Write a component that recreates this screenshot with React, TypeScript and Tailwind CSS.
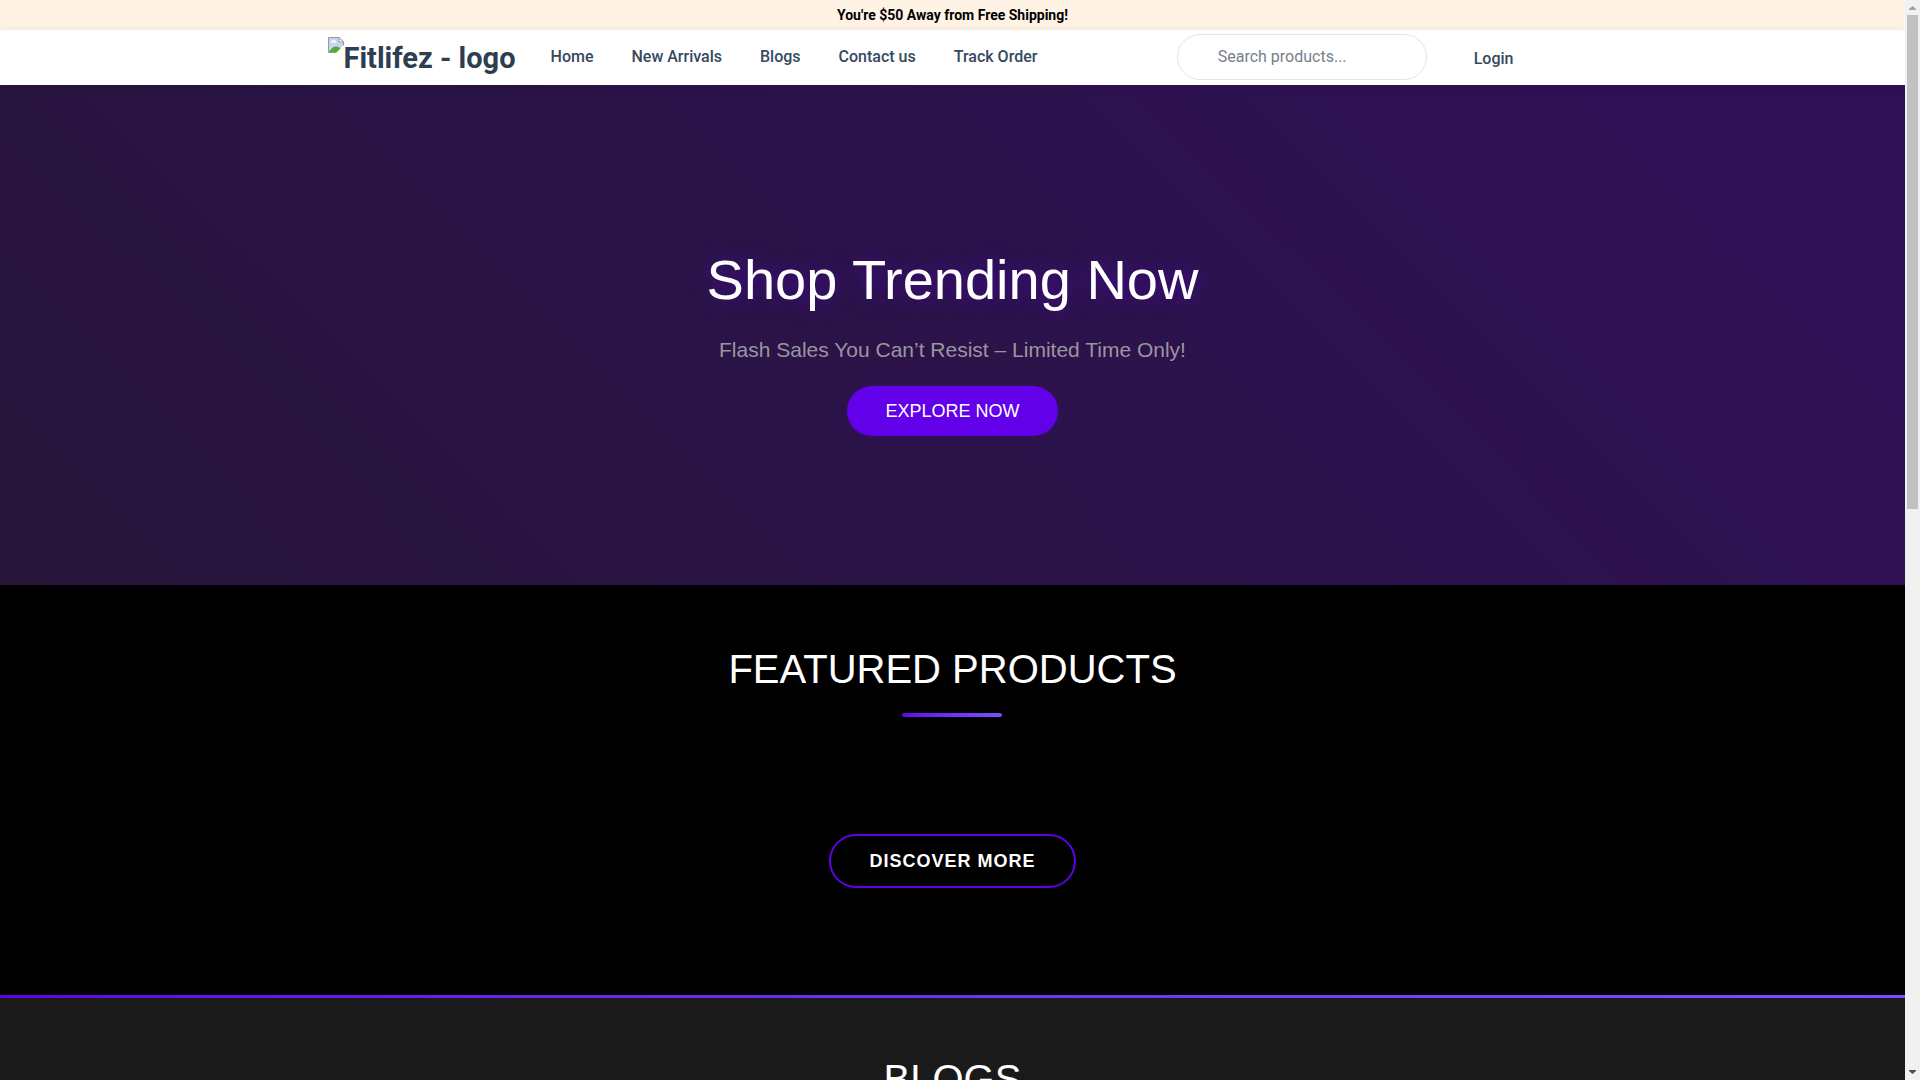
const links = ["Home", "New Arrivals", "Blogs", "Contact us", "Track Order"];

function BrokenImage() {
  return (
    <svg width="16" height="16" viewBox="0 0 16 16" aria-hidden="true">
      <path d="M0.5 0.5H11L15.5 5V15.5H0.5Z" fill="#c5d6f5" />
      <path d="M3 5.5a1.3 1.3 0 0 1 1.2-1.6A1.8 1.8 0 0 1 7.4 4a1 1 0 0 1 .6 1.5Z" fill="#fff" />
      <path d="M1 15C3 11 6 9 9 9.5S13 12 15 15Z" fill="#56ab32" />
      <path d="M0.5 15.5V0.5H11L15.5 5V15.5H0.5" fill="none" stroke="#9a9a9a" />
      <path d="M11 0.5V5H15.5Z" fill="#fff" stroke="#9a9a9a" />
      <path d="M16 8L8 16H10.5L16 11Z" fill="#fff" />
      <path d="M16 10.500L10.500 16H16Z" fill="#fff" />
    </svg>
  );
}

function Header() {
  return (
    <header className="font-[Roboto,sans-serif]">
      <div className="h-[30px] bg-[#fff3e6] text-center text-sm leading-[30px] font-bold text-black">
        You're $50 Away from Free Shipping!
      </div>
      <div className="relative bg-white shadow-[0_2px_10px_rgba(0,0,0,0.1)]">
        <div className="mx-auto flex h-[55px] max-w-[1280px] items-center px-[15px] pb-0.5">
          <a href="#" className="flex pt-0.5 text-[#2c3e50]">
            <BrokenImage />
            <span className="text-[29px] leading-[42px] font-bold">Fitlifez - logo</span>
          </a>
          <nav className="ml-[35px] flex gap-[38px]">
            {links.map((link) => (
              <a key={link} href="#" className="font-medium text-[#34495e]">
                {link}
              </a>
            ))}
          </nav>
          <input
            type="search"
            aria-label="Search products"
            placeholder="Search products..."
            className="ml-auto h-[46px] w-[250px] rounded-[25px] border border-[#dfe6e9] pr-4 pl-10 placeholder:text-[#757f8a]"
          />
          <a href="#" className="mr-16 ml-[47px] pt-1 font-medium text-[#34495e]">
            Login
          </a>
        </div>
      </div>
    </header>
  );
}

function Hero() {
  return (
    <section className="flex h-[500px] flex-col items-center justify-center bg-[linear-gradient(45deg,#27153a,#301159)] pt-[11px] text-center">
      <h1 className="text-[56px] leading-[68px] text-white [text-shadow:0_0_20px_rgba(98,0,234,0.5)]">
        Shop Trending Now
      </h1>
      <p className="mt-6 text-[21px] leading-6 text-[#9c959f]">
        Flash Sales You Can’t Resist – Limited Time Only!
      </p>
      <a
        href="#"
        className="mt-6 rounded-[25px] bg-[#6200ea] px-[38px] py-3 text-lg leading-[26px] text-white shadow-[0_0_20px_rgba(98,0,234,0.1)]"
      >
        EXPLORE NOW
      </a>
    </section>
  );
}

function SectionTitle({ children }: { children: string }) {
  return (
    <div className="flex flex-col items-center">
      <h2 className="text-[40px] leading-[48px] text-white">{children}</h2>
      <div className="mt-5 h-1 w-[100px] rounded-sm bg-linear-to-r from-[#6200ea] to-[#7c4dff]" />
    </div>
  );
}

function Scrollbar() {
  return (
    <div className="flex w-[15px] shrink-0 flex-col items-center bg-[#f1f1f1]" aria-hidden="true">
      <svg width="15" height="15" viewBox="0 0 15 15">
        <path d="M4 10V9L7.500 6L11 9V10Z" fill="#a3a3a3" />
      </svg>
      <div className="h-[494px] w-[11px] bg-[#c1c1c1]" />
      <svg className="mt-auto" width="15" height="15" viewBox="0 0 15 15">
        <path d="M4 5V6L7.500 9L11 6V5Z" fill="#505050" />
      </svg>
    </div>
  );
}

export default function App() {
  return (
    <div className="flex h-screen overflow-hidden bg-black font-['Liberation_Sans',Arial,sans-serif]">
      <div className="min-w-0 flex-1 overflow-hidden">
        <Header />
        <Hero />
        <section className="flex flex-col items-center bg-black pt-[60px] pb-[107px]">
          <SectionTitle>FEATURED PRODUCTS</SectionTitle>
          <a
            href="#"
            className="mt-[117px] rounded-[27px] border-2 border-[#6200ea] px-[38px] py-3 text-lg leading-[26px] font-bold tracking-[1px] text-white"
          >
            DISCOVER MORE
          </a>
        </section>
        <div className="h-[3px] bg-linear-to-r from-[#6200ea] to-[#7c4dff]" />
        <section className="bg-[#1a1a1a] pt-[57px] pb-16">
          <SectionTitle>BLOGS</SectionTitle>
        </section>
      </div>
      <Scrollbar />
    </div>
  );
}
